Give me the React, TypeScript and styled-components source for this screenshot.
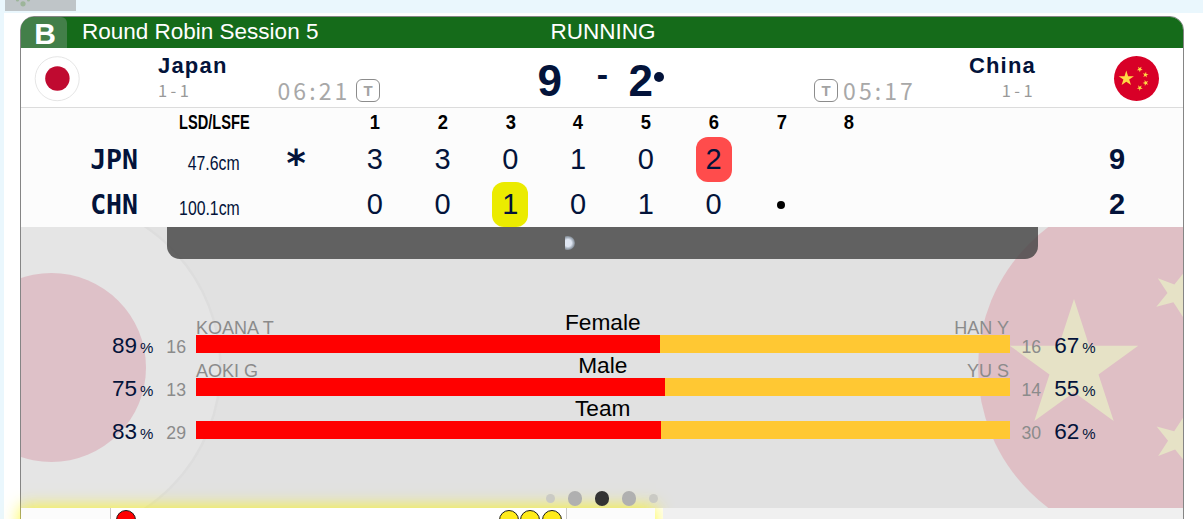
import React from "react";
import styled, { createGlobalStyle } from "styled-components";

const GlobalStyle = createGlobalStyle`
  * { box-sizing: border-box; }
  html, body { margin: 0; padding: 0; }
  body { background: #eaf7fd; font-family: "Liberation Sans", Arial, sans-serif; color: #000; }
`;

const navy = "#03133a";

const Page = styled.div`
  height: 519px;
  overflow: hidden;
  padding-left: 4px;
`;
const TopStrip = styled.div`
  height: 13px;
  padding-left: 1px;
`;
const CornerTag = styled.div`
  width: 71px;
  height: 11px;
  background: #bfc5c8;
  svg { display: block; }
`;
const Sheet = styled.div`
  background: #fff;
  height: 506px;
  padding: 3px 19px 0 16px;
`;
const Card = styled.section`
  width: 1164px;
  height: 560px;
  border: 1px solid #858585;
  border-radius: 14px 14px 0 0;
`;
const Header = styled.header`
  height: 31px;
  display: grid;
  grid-template-columns: 46px 420px 232px 1fr;
  background: #156b1a;
  border-radius: 13px 13px 0 0;
  color: #fff;
  font-size: 22.5px;
  line-height: 30px;
`;
const SheetLetter = styled.div`
  height: 31px;
  background: #437f49;
  border-radius: 13px 6px 0 0;
  font-size: 30px;
  font-weight: bold;
  line-height: 33px;
  text-align: center;
  padding-left: 2px;
`;
const SessionName = styled.div`
  padding-left: 15px;
  white-space: nowrap;
`;
const Status = styled.div`
  text-align: center;
`;

const Teams = styled.div`
  height: 60px;
  display: flex;
  justify-content: space-between;
  border-bottom: 1px solid #dcdcdc;
`;
const Side = styled.div<{ $end?: boolean }>`
  display: flex;
  flex-direction: ${(p) => (p.$end ? "row-reverse" : "row")};
  width: 440px;
  padding: ${(p) => (p.$end ? "0 24px 0 0" : "0 0 0 13px")};
`;
const FlagSlot = styled.div`
  width: 46px;
  padding-top: 8px;
  svg { display: block; }
`;
const TeamInfo = styled.div<{ $end?: boolean }>`
  padding-top: 5px;
  ${(p) => (p.$end ? "padding-right: 77px; width: 155px;" : "padding-left: 78px; width: 197px;")}
  text-align: ${(p) => (p.$end ? "right" : "left")};
`;
const TeamName = styled.div`
  font-size: 22px;
  line-height: 26px;
  font-weight: bold;
  letter-spacing: 1.2px;
  color: ${navy};
`;
const Record = styled.div`
  font-family: "Noto Sans CJK JP", sans-serif;
  font-size: 16.5px;
  line-height: 22px;
  letter-spacing: 3.4px;
  color: #999;
`;
const ClockLine = styled.div<{ $end?: boolean }>`
  display: flex;
  align-items: center;
  gap: ${(p) => (p.$end ? 5 : 5.5)}px;
  height: 24px;
  margin-top: 30px;
  padding-left: ${(p) => (p.$end ? 0 : 0.5)}px;
  flex-direction: ${(p) => (p.$end ? "row-reverse" : "row")};
  ${(p) => (p.$end ? "margin-right: 42px;" : "")}
`;
const Clock = styled.span`
  font-family: "Noto Sans CJK JP", sans-serif;
  font-size: 23px;
  line-height: 22px;
  letter-spacing: 3.1px;
  color: #a8a8a8;
`;
const TimeoutBox = styled.span`
  width: 24px;
  height: 23px;
  border: 1px solid #8c8c8c;
  border-radius: 6px;
  font-size: 15px;
  font-weight: bold;
  line-height: 22px;
  text-align: center;
  color: #a3a3a3;
`;
const BigScore = styled.div`
  flex: 1;
  display: grid;
  grid-template-columns: 24px 67px 24px 14px;
  justify-content: center;
  font-size: 44px;
  font-weight: bold;
  line-height: 66px;
  color: ${navy};
`;
const Dash = styled.span`
  font-size: 34px;
  line-height: 52px;
  text-align: center;
  padding-left: 15px;
`;
const Hammer = styled.i<{ $size: number }>`
  width: ${(p) => p.$size}px;
  height: ${(p) => p.$size}px;
  border-radius: 50%;
  background: currentColor;
`;
const HammerSlot = styled.span`
  display: flex;
  padding: 24px 0 0 1px;
`;

const Board = styled.div`
  background: #fcfcfc;
  height: 119px;
`;
const BoardRow = styled.div<{ $head?: boolean }>`
  display: grid;
  grid-template-columns: 117px 103px 100px repeat(8, 67.75px) 300px;
  grid-template-rows: 100%;
  height: ${(p) => (p.$head ? 29 : 45)}px;
  line-height: ${(p) => (p.$head ? 28 : 45)}px;
  font-size: ${(p) => (p.$head ? 20 : 29)}px;
  font-weight: ${(p) => (p.$head ? "bold" : "normal")};
  color: ${(p) => (p.$head ? "#000" : navy)};
`;
const Code = styled.div`
  font-family: "DejaVu Sans Mono", monospace;
  font-weight: bold;
  font-size: 26.5px;
  line-height: 45px;
  text-align: right;
`;
const Measure = styled.div<{ $scale: number; $head?: boolean }>`
  font-size: 20px;
  text-align: right;
  white-space: nowrap;
  direction: rtl;
  padding-top: ${(p) => (p.$head ? 0 : 4)}px;
  margin-right: ${(p) => (p.$head ? -9 : 1)}px;
  span {
    display: inline-block;
    direction: ltr;
    transform: scaleX(${(p) => p.$scale});
    transform-origin: right center;
  }
`;
const LastStone = styled.div`
  font-family: "DejaVu Sans Mono", monospace;
  font-weight: bold;
  font-size: 37px;
  padding: 4px 0 0 44px;
`;
const End = styled.div<{ $narrow?: boolean }>`
  display: flex;
  justify-content: center;
  align-items: flex-start;
  ${(p) => (p.$narrow ? "transform: scaleX(0.92);" : "")}
`;
const NextEnd = styled(End)`
  align-items: center;
  color: #000;
`;
const Mark = styled.span<{ $color?: string }>`
  width: 36px;
  height: 45px;
  border-radius: 12px;
  text-align: center;
  background: ${(p) => p.$color ?? "transparent"};
`;
const Total = styled.div`
  font-weight: bold;
  padding-left: 226px;
`;

const Stats = styled.div`
  position: relative;
  height: 281px;
  overflow: hidden;
  background: #e1e1e1;
`;
const Backdrop = styled.svg`
  position: absolute;
  left: 0;
  top: 0;
`;
const StatsBody = styled.div`
  position: relative;
`;
const Ticker = styled.div`
  width: 871px;
  height: 32px;
  margin: 0 0 51px 146px;
  padding: 9px 0 0 398px;
  background: rgba(65, 65, 65, 0.8);
  border-radius: 0 0 13px 13px;
`;
const Glint = styled.div`
  width: 10px;
  height: 14px;
  border-radius: 1px 7px 7px 1px;
  background: radial-gradient(ellipse at 30% 50%, #dfe6f2 0 35%, rgba(170, 184, 200, 0.75) 60%, rgba(100, 100, 100, 0) 85%);
`;
const StatRow = styled.div`
  display: grid;
  grid-template-columns: 175px 813.5px 173.5px;
  height: 43px;
`;
const Middle = styled.div``;
const Caption = styled.div`
  display: grid;
  grid-template-columns: 1fr 100px 1fr;
  align-items: end;
  height: 25px;
`;
const Player = styled.div<{ $end?: boolean }>`
  font-size: 18px;
  line-height: 14px;
  color: #8b8b8b;
  white-space: nowrap;
  text-align: ${(p) => (p.$end ? "right" : "left")};
  padding-right: ${(p) => (p.$end ? 0.5 : 0)}px;
`;
const Category = styled.div`
  font-size: 22.7px;
  line-height: 25px;
  text-align: center;
`;
const Bar = styled.div`
  display: flex;
  height: 18px;
  background: #ffc833;
`;
const BarFill = styled.div`
  background: #f00;
`;
const Figures = styled.div<{ $end?: boolean }>`
  display: flex;
  align-items: baseline;
  padding-top: 25px;
  height: 43px;
  line-height: 22px;
  justify-content: ${(p) => (p.$end ? "flex-start" : "flex-end")};
  padding-left: ${(p) => (p.$end ? 12 : 0)}px;
  padding-right: ${(p) => (p.$end ? 0 : 10)}px;
`;
const Percent = styled.span`
  font-size: 22.5px;
  color: ${navy};
  small { font-size: 15px; margin-left: 3px; }
`;
const Shots = styled.span<{ $end?: boolean }>`
  font-size: 17.7px;
  color: #8b8b8b;
  margin: ${(p) => (p.$end ? "0 13px 0 0" : "0 0 0 13px")};
`;
const Pager = styled.div`
  position: relative;
  z-index: 2;
  display: flex;
  align-items: center;
  justify-content: center;
  height: 15px;
  margin-top: 52px;
  gap: 12.5px;
`;
const PageDot = styled.i<{ $size: number; $color: string }>`
  width: ${(p) => p.$size}px;
  height: ${(p) => p.$size}px;
  border-radius: 50%;
  background: ${(p) => p.$color};
`;

const NextPanel = styled.div`
  display: grid;
  grid-template-columns: 634px 8px 1fr;
  height: 70px;
`;
const Active = styled.div`
  position: relative;
  display: grid;
  grid-template-columns: 89px 457px 1fr;
  background: #fcfcfc;
  box-shadow: 0 0 16px 1px rgba(255, 247, 0, 0.8);
`;
const Gap = styled.div``;
const Rest = styled.div`
  position: relative;
  background: #f0f0f0;
`;
const Rocks = styled.div`
  display: flex;
  justify-content: space-between;
  background: #fff;
  border: solid #c9c9c9;
  border-width: 0 1px;
  padding: 2px 4.5px 0 4.5px;
`;
const RockGroup = styled.div`
  display: flex;
  gap: 1.4px;
`;
const Rock = styled.i<{ $color: string }>`
  width: 20px;
  height: 20px;
  border-radius: 50%;
  border: 1.5px solid #1a1a1a;
  background: ${(p) => p.$color};
`;

function star(cx: number, cy: number, r: number, deg: number) {
  return Array.from({ length: 10 }, (_, i) => {
    const a = ((deg + i * 36) * Math.PI) / 180;
    const q = i % 2 ? r * 0.382 : r;
    return `${(cx + q * Math.cos(a)).toFixed(2)},${(cy + q * Math.sin(a)).toFixed(2)}`;
  }).join(" ");
}

const JapanFlag = () => (
  <svg width="46" height="46" viewBox="0 0 46 46">
    <circle cx="23.2" cy="22.7" r="22" fill="#fff" stroke="#dedede" strokeWidth="0.8" />
    <circle cx="23.4" cy="22.5" r="12.2" fill="#c00a30" />
  </svg>
);

const ChinaFlag = () => (
  <svg width="46" height="46" viewBox="0 0 46 46">
    <circle cx="23.5" cy="22.5" r="22.5" fill="#d80027" />
    <g fill="#ffda44">
      <polygon points={star(13.3, 22.6, 8, -90)} />
      <polygon points={star(26.8, 13.2, 3.1, -55)} />
      <polygon points={star(32.5, 18.8, 3.1, -80)} />
      <polygon points={star(32.7, 27, 3.1, -110)} />
      <polygon points={star(26.8, 31.9, 3.1, -125)} />
    </g>
  </svg>
);

const ends = [1, 2, 3, 4, 5, 6, 7, 8];

type Line = { code: string; lsd: string; first: boolean; scores: string[]; total: string; mark: number; color: string };
const lines: Line[] = [
  { code: "JPN", lsd: "47.6cm", first: true, scores: ["3", "3", "0", "1", "0", "2", "", ""], total: "9", mark: 5, color: "#ff4c4c" },
  { code: "CHN", lsd: "100.1cm", first: false, scores: ["0", "0", "1", "0", "1", "0", "•", ""], total: "2", mark: 2, color: "#ebeb00" },
];

const stats = [
  { label: "Female", a: "KOANA T", b: "HAN Y", pa: 89, pb: 67, na: 16, nb: 16, fill: 464 },
  { label: "Male", a: "AOKI G", b: "YU S", pa: 75, pb: 55, na: 13, nb: 14, fill: 469 },
  { label: "Team", a: "", b: "", pa: 83, pb: 62, na: 29, nb: 30, fill: 465 },
];

export default function App() {
  return (
    <Page>
      <GlobalStyle />
      <TopStrip>
        <CornerTag>
          <svg width="71" height="11" viewBox="0 0 71 11">
            <g fill="#9db59a">
              <circle cx="18" cy="3.8" r="2.6" />
              <circle cx="12.5" cy="0" r="1.6" />
              <circle cx="23.5" cy="0" r="1.6" />
            </g>
          </svg>
        </CornerTag>
      </TopStrip>
      <Sheet>
        <Card>
          <Header>
            <SheetLetter>B</SheetLetter>
            <SessionName>Round Robin Session 5</SessionName>
            <Status>RUNNING</Status>
          </Header>
          <Teams>
            <Side>
              <FlagSlot><JapanFlag /></FlagSlot>
              <TeamInfo>
                <TeamName>Japan</TeamName>
                <Record>1-1</Record>
              </TeamInfo>
              <ClockLine>
                <Clock>06:21</Clock>
                <TimeoutBox>T</TimeoutBox>
              </ClockLine>
            </Side>
            <BigScore>
              <span>9</span>
              <Dash>-</Dash>
              <span>2</span>
              <HammerSlot><Hammer $size={10} /></HammerSlot>
            </BigScore>
            <Side $end>
              <FlagSlot><ChinaFlag /></FlagSlot>
              <TeamInfo $end>
                <TeamName>China</TeamName>
                <Record>1-1</Record>
              </TeamInfo>
              <ClockLine $end>
                <Clock>05:17</Clock>
                <TimeoutBox>T</TimeoutBox>
              </ClockLine>
            </Side>
          </Teams>
          <Board>
            <BoardRow $head>
              <span />
              <Measure $head $scale={0.73}><span>LSD/LSFE</span></Measure>
              <span />
              {ends.map((n) => <End key={n} $narrow>{n}</End>)}
            </BoardRow>
            {lines.map((l) => (
              <BoardRow key={l.code}>
                <Code>{l.code}</Code>
                <Measure $scale={0.79}><span>{l.lsd}</span></Measure>
                <LastStone>{l.first ? "*" : ""}</LastStone>
                {l.scores.map((s, i) =>
                  s === "•" ? (
                    <NextEnd key={i}><Hammer $size={8} /></NextEnd>
                  ) : (
                    <End key={i}><Mark $color={l.mark === i ? l.color : undefined}>{s}</Mark></End>
                  )
                )}
                <Total>{l.total}</Total>
              </BoardRow>
            ))}
          </Board>
          <Stats>
            <Backdrop width="1162" height="281" viewBox="21 227 1162 281">
              <circle cx="51" cy="367.5" r="169.5" fill="#e5e5e5" stroke="#dddddd" strokeWidth="2.5" />
              <circle cx="51.5" cy="367.5" r="94.5" fill="#dec1c8" />
              <circle cx="1153.5" cy="367.5" r="175.5" fill="#dfbfc5" />
              <g fill="#e6e2c6">
                <polygon points={star(1074, 366.5, 67.5, -90)} />
                <polygon points={star(1176.8, 293.5, 24.4, 219)} />
                <polygon points={star(1177.6, 440.2, 25, 213)} />
              </g>
            </Backdrop>
            <StatsBody>
              <Ticker><Glint /></Ticker>
              {stats.map((s) => (
                <StatRow key={s.label}>
                  <Figures>
                    <Percent>{s.pa}<small>%</small></Percent>
                    <Shots>{s.na}</Shots>
                  </Figures>
                  <Middle>
                    <Caption>
                      <Player>{s.a}</Player>
                      <Category>{s.label}</Category>
                      <Player $end>{s.b}</Player>
                    </Caption>
                    <Bar><BarFill style={{ width: s.fill }} /></Bar>
                  </Middle>
                  <Figures $end>
                    <Shots $end>{s.nb}</Shots>
                    <Percent>{s.pb}<small>%</small></Percent>
                  </Figures>
                </StatRow>
              ))}
              <Pager>
                <PageDot $size={9} $color="#cacac4" />
                <PageDot $size={14.5} $color="#b0b0b0" />
                <PageDot $size={14.5} $color="#333333" />
                <PageDot $size={14.5} $color="#b0b0b0" />
                <PageDot $size={9} $color="#cacac4" />
              </Pager>
            </StatsBody>
          </Stats>
          <NextPanel>
            <Active>
              <span />
              <Rocks>
                <RockGroup><Rock $color="#f00" /></RockGroup>
                <RockGroup>
                  <Rock $color="#ffeb1a" />
                  <Rock $color="#ffeb1a" />
                  <Rock $color="#ffeb1a" />
                </RockGroup>
              </Rocks>
            </Active>
            <Gap />
            <Rest />
          </NextPanel>
        </Card>
      </Sheet>
    </Page>
  );
}
